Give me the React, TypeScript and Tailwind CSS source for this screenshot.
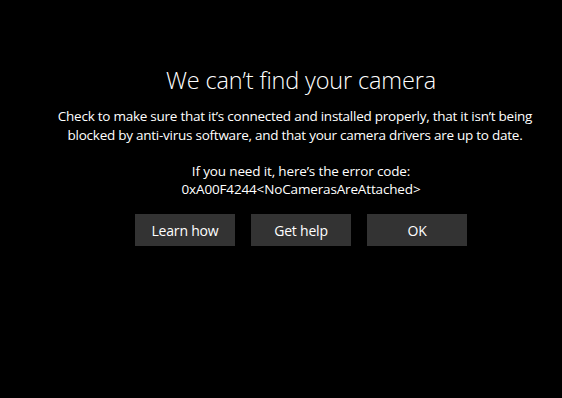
export default function App() {
  const buttons = ["Learn how", "Get help", "OK"]

  return (
    <div
      className="w-[562px] h-[398px] bg-black text-white flex flex-col items-center pl-[40px] pt-[64px]"
      style={{ fontFamily: '"Open Sans", "Noto Sans", sans-serif' }}
    >
      <h1 className="text-[23.5px] font-light leading-[32px] tracking-[-0.15px]">We can’t find your camera</h1>
      <p className="mt-[11px] text-[13.5px] leading-[19px] text-center tracking-[-0.25px] -ml-[12px]">
        Check to make sure that it’s connected and installed properly, that it isn’t being
        <br />
        blocked by anti-virus software, and that your camera drivers are up to date.
      </p>
      <p className="mt-[17px] text-[13.5px] leading-[18px] text-center tracking-[-0.15px]">
        If you need it, here’s the error code:
        <br />
        0xA00F4244&lt;NoCamerasAreAttached&gt;
      </p>
      <div className="mt-[16px] flex gap-[16px]">
        {buttons.map((label) => (
          <button
            key={label}
            className="w-[100px] h-[32px] bg-[#333333] text-[14px] text-white tracking-[-0.2px]"
          >
            {label}
          </button>
        ))}
      </div>
    </div>
  )
}
